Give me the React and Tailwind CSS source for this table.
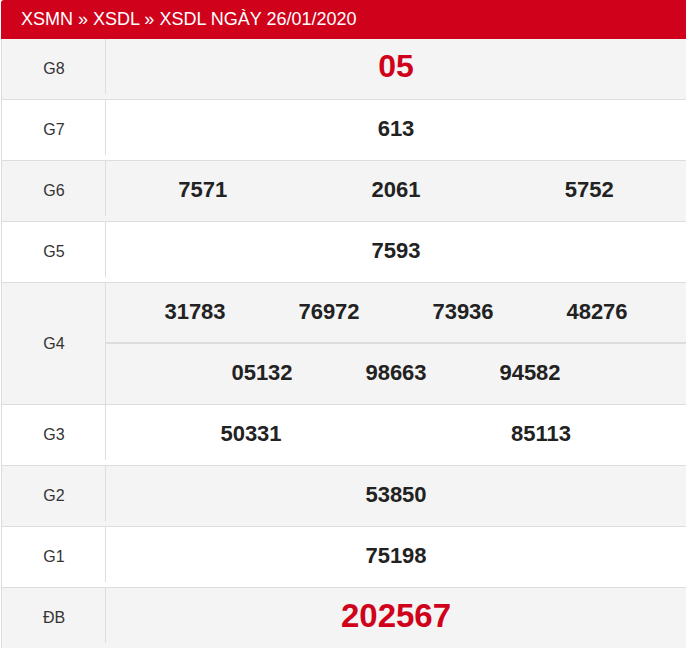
const rows = [
  { label: 'G8', nums: ['05'], big: 'text-[32px] text-[#d0021b] -translate-y-[3px]' },
  { label: 'G7', nums: ['613'] },
  { label: 'G6', nums: ['7571', '2061', '5752'] },
  { label: 'G5', nums: ['7593'] },
  { label: 'G4', lines: [['31783', '76972', '73936', '48276'], ['05132', '98663', '94582']] },
  { label: 'G3', nums: ['50331', '85113'] },
  { label: 'G2', nums: ['53850'] },
  { label: 'G1', nums: ['75198'] },
  { label: 'ĐB', nums: ['202567'], big: 'text-[33px] text-[#d0021b] -translate-y-[3px]' },
];

function NumberLine({ nums, fixed, big, height = 'h-[60px]' }) {
  return (
    <div className={`flex ${height} items-center justify-center`}>
      {nums.map((n) => (
        <span
          key={n}
          className={`${fixed ? 'w-[134px]' : 'flex-1'} text-center font-bold leading-none ${
            big || 'text-[22px] text-[#222] -translate-y-px'
          }`}
        >
          {n}
        </span>
      ))}
    </div>
  );
}

export default function App() {
  return (
    <div className="w-[686px] bg-white pl-px font-['Liberation_Sans',Arial,sans-serif]">
      <div className="flex h-[39px] items-center rounded-tl-[3px] bg-[#d0021b] pl-[20px] text-[18px] text-white">
        XSMN » XSDL » XSDL NGÀY 26/01/2020
      </div>
      <div className="border-l border-[#ddd]">
        {rows.map((row, i) => (
          <div
            key={row.label}
            className={`flex border-b border-[#ddd] ${i % 2 === 0 ? 'bg-[#f4f4f4]' : 'bg-white'}`}
          >
            <div
              className={`relative flex w-[104px] shrink-0 items-center justify-center text-[16px] text-[#333] after:absolute after:right-0 after:top-0 after:w-px after:bg-[#ddd] ${
                row.lines ? 'after:bottom-0' : 'after:bottom-[5px]'
              }`}
            >
              {row.label}
            </div>
            <div className="flex-1">
              {row.lines ? (
                row.lines.map((line, j) => (
                  <div key={j} className={j === 0 ? 'border-b-[2px] border-[#ddd]' : ''}>
                    <NumberLine nums={line} fixed height={j === 0 ? 'h-[59px]' : 'h-[60px]'} />
                  </div>
                ))
              ) : (
                <NumberLine nums={row.nums} big={row.big} />
              )}
            </div>
          </div>
        ))}
      </div>
    </div>
  );
}
